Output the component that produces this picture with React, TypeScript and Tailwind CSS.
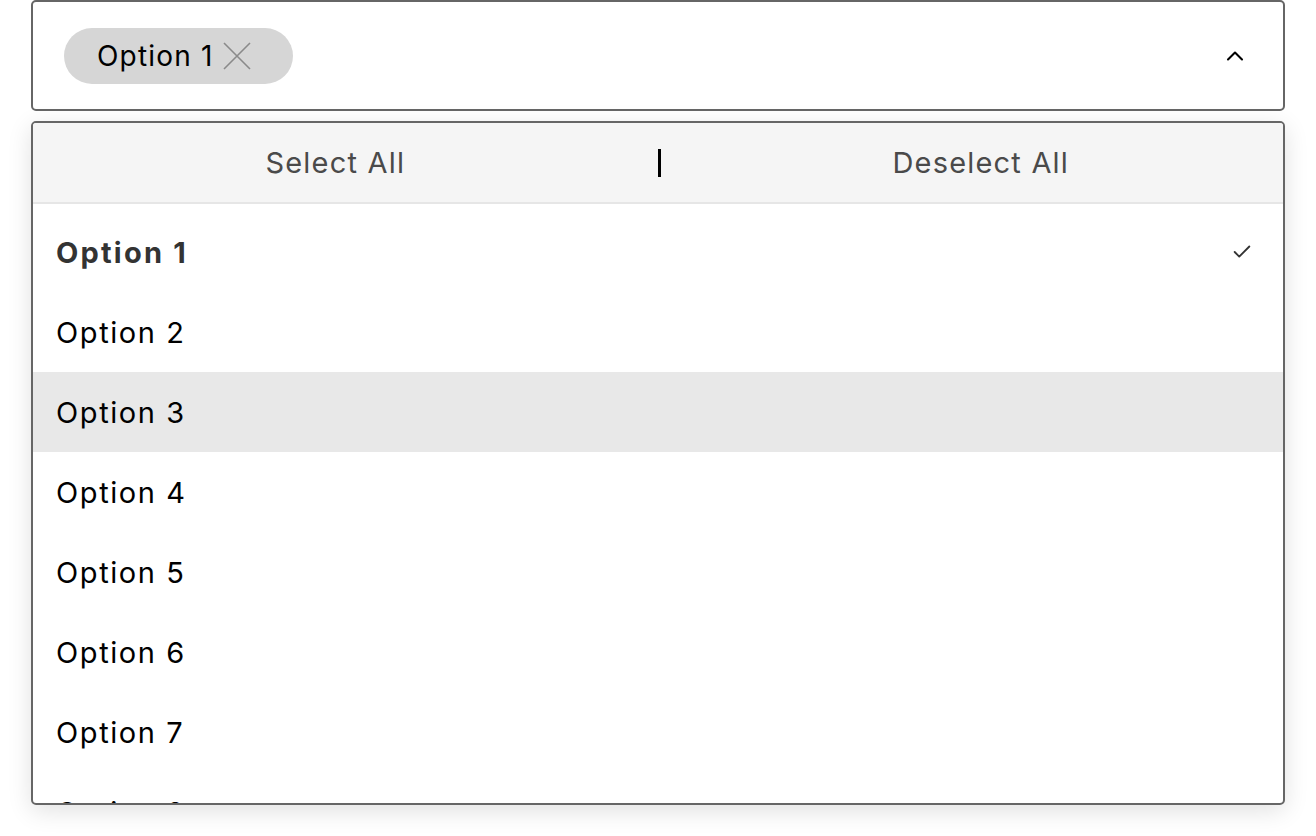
import { ChevronUp, Check } from "lucide-react";

const options = ["Option 1", "Option 2", "Option 3", "Option 4", "Option 5", "Option 6", "Option 7", "Option 8", "Option 9"];

export default function App() {
  return (
    <div className="w-[1316px] h-[836px] bg-white font-['Inter',sans-serif] overflow-hidden">
      <div className="pl-[31px] pr-[31px] pt-0">
        {/* trigger */}
        <div className="h-[111px] border-2 border-[#666] rounded-[5px] flex items-center pl-[31px] pr-[34px]">
          <div className="h-[56px] rounded-full bg-[#d6d6d6] flex items-center pl-[33px] pr-[42px] mt-[1px]">
            <span className="text-[28px] leading-none text-black tracking-[1.2px]">Option 1</span>
            <svg width="28" height="28" viewBox="0 0 28 28" className="ml-[9px]">
              <path d="M1 1L27 27M27 1L1 27" stroke="#8a8a8a" strokeWidth="1.6" fill="none" />
            </svg>
          </div>
          <div className="flex-1" />
          <ChevronUp className="w-[28px] h-[28px] text-black" strokeWidth={1.8} />
        </div>

        {/* dropdown */}
        <div className="mt-[10px] h-[684px] border-2 border-[#666] rounded-[5px] overflow-hidden shadow-[0_6px_24px_rgba(0,0,0,0.12)] flex flex-col">
          <div className="h-[81px] shrink-0 bg-[#f5f5f5] border-b-2 border-[#e6e6e6] flex items-center">
            <div className="flex-1 text-center text-[29px] leading-none text-[#4a4a4a] tracking-[1.2px] pr-[20px]">Select All</div>
            <div className="w-[3px] h-[28px] bg-black" />
            <div className="flex-1 text-center text-[29px] leading-none text-[#4a4a4a] tracking-[1.2px] pl-[18px]">Deselect All</div>
          </div>
          <div className="pt-[8px]">
            {options.map((o, i) => (
              <div
                key={o}
                className={
                  "h-[80px] flex items-center pl-[23px] pr-[30px] text-[29px] leading-none " +
                  (i === 2 ? "bg-[#e8e8e8] " : "") +
                  (i === 0 ? "font-bold text-[#333] tracking-[2.2px]" : "text-black tracking-[1.6px]")
                }
              >
                <span className="flex-1">{o}</span>
                {i === 0 && <Check className="w-[22px] h-[22px] text-[#333]" strokeWidth={2} />}
              </div>
            ))}
          </div>
        </div>
      </div>
    </div>
  );
}
